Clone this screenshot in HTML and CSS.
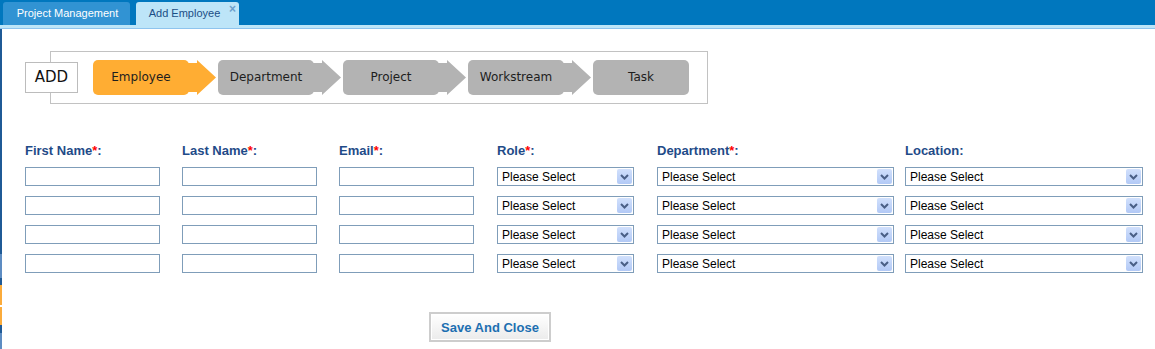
FILE: index.html
```html
<!DOCTYPE html>
<html lang="en">
<head>
  <meta charset="UTF-8" />
  <title>Add Employee</title>
  <link rel="stylesheet" href="styles.css">
</head>
<body>

  <div class="tabbar">
    <div class="tab">Project Management</div>
    <div class="tab tab-aktiv">Add Employee <span class="tab-close">&times;</span></div>
  </div>
  <div class="tabline"></div>

  <div class="page">
    <div class="edge"></div>

    <div class="content">
      <div class="wizard">
        <div class="wizard-add">ADD</div>
        <div class="wizard-box">
          <div class="step step-aktiv">
            <div class="step-label">Employee</div>
            <svg class="step-arrow" width="30" height="35" viewBox="0 0 30 35"><polygon points="0,3 9,3 9,0 28,17.5 9,35 9,32 0,32"/></svg>
          </div>
          <div class="step">
            <div class="step-label">Department</div>
            <svg class="step-arrow" width="30" height="35" viewBox="0 0 30 35"><polygon points="0,3 9,3 9,0 28,17.5 9,35 9,32 0,32"/></svg>
          </div>
          <div class="step">
            <div class="step-label">Project</div>
            <svg class="step-arrow" width="30" height="35" viewBox="0 0 30 35"><polygon points="0,3 9,3 9,0 28,17.5 9,35 9,32 0,32"/></svg>
          </div>
          <div class="step">
            <div class="step-label">Workstream</div>
            <svg class="step-arrow" width="30" height="35" viewBox="0 0 30 35"><polygon points="0,3 9,3 9,0 28,17.5 9,35 9,32 0,32"/></svg>
          </div>
          <div class="step">
            <div class="step-label">Task</div>
          </div>
        </div>
      </div>

      <div class="formular" id="formular">
        <div class="label">First Name<span class="pflicht">*</span>:</div>
        <div class="label">Last Name<span class="pflicht">*</span>:</div>
        <div class="label">Email<span class="pflicht">*</span>:</div>
        <div class="label">Role<span class="pflicht">*</span>:</div>
        <div class="label">Department<span class="pflicht">*</span>:</div>
        <div class="label">Location:</div>
      </div>

      <button class="btn-save">Save And Close</button>
    </div>
  </div>

  <script>
    const formular = document.getElementById("formular");
    const pfeil = '<svg width="9" height="6" viewBox="0 0 9 6"><polyline points="1,1 4.5,4.5 8,1" fill="none" stroke="#4a5f86" stroke-width="2"/></svg>';

    for (let zeile = 0; zeile < 4; zeile++) {
      for (let i = 0; i < 3; i++) {
        const feld = document.createElement("input");
        feld.type = "text";
        feld.className = "feld";
        formular.appendChild(feld);
      }
      ["auswahl-role", "auswahl-dept", "auswahl-loc"].forEach(klasse => {
        const auswahl = document.createElement("div");
        auswahl.className = "auswahl " + klasse;
        auswahl.innerHTML = '<span class="auswahl-text">Please Select</span><span class="auswahl-btn">' + pfeil + '</span>';
        formular.appendChild(auswahl);
      });
    }
  </script>
</body>
</html>
```

FILE: styles.css
```css
* {
  box-sizing: border-box;
}

body {
  margin: 0;
  padding: 0;
  overflow: hidden;
  font-family: "Liberation Sans", Arial, sans-serif;
  background: #fff;
}

/* Reiter oben */
.tabbar {
  height: 25px;
  background: #0077be;
  display: flex;
  align-items: flex-end;
  gap: 6px;
  padding-left: 3px;
}

.tab {
  height: 23px;
  width: 127px;
  background: #3193d3;
  color: #fff;
  font-size: 11px;
  line-height: 23px;
  text-align: center;
  border-radius: 3px 3px 0 0;
  padding-left: 2px;
}

.tab-aktiv {
  width: 103px;
  background: #bde5f8;
  color: #1b4e86;
  position: relative;
  padding-right: 8px;
}

.tab-close {
  position: absolute;
  top: -4px;
  right: 3px;
  font-size: 12px;
  font-weight: bold;
  color: #6c9fcb;
}

.tabline {
  height: 4px;
  background: #bde5f8;
  border-bottom: 1px solid #8ec4ee;
}

.page {
  display: flex;
  height: 320px;
}

.edge {
  width: 3px;
  background: linear-gradient(to bottom,
    #1f5a96 0, #1f5a96 225px,
    #5d8cc2 225px, #5d8cc2 249px,
    #1f5a96 249px, #1f5a96 256px,
    #fbab3b 256px, #fbab3b 276px,
    #fff 276px, #fff 278px,
    #fbab3b 278px, #fbab3b 296px,
    #1f5a96 296px, #1f5a96 304px,
    #5d8cc2 304px);
  border-right: 1px solid #fff;
}

.content {
  flex: 1;
  padding-top: 22px;
}

/* Schritt-Leiste */
.wizard {
  display: flex;
  align-items: center;
  margin-left: 22px;
}

.wizard-add {
  position: relative;
  z-index: 1;
  width: 53px;
  height: 31px;
  background: #fff;
  border: 1px solid #bcbcbc;
  font-family: "DejaVu Sans", Verdana, sans-serif;
  font-size: 15px;
  line-height: 29px;
  text-align: center;
  color: #111;
}

.wizard-box {
  margin-left: -28px;
  width: 658px;
  height: 53px;
  border: 1px solid #c2c2c2;
  display: flex;
  align-items: center;
  padding-left: 42px;
}

.step {
  display: flex;
  align-items: center;
}

.step-label {
  width: 96px;
  height: 35px;
  background: #b3b3b3;
  border-radius: 5px;
  font-family: "DejaVu Sans", Verdana, sans-serif;
  font-size: 12px;
  line-height: 35px;
  text-align: center;
  color: #1e1e1e;
}

.step-arrow {
  display: block;
  margin-left: -1px;
  fill: #b3b3b3;
}

.step-aktiv .step-label {
  background: #ffad33;
}

.step-aktiv .step-arrow {
  fill: #ffad33;
}

/* Formular */
.formular {
  display: grid;
  grid-template-columns: 157px 157px 158px 160px 248px 238px;
  grid-auto-rows: 19px;
  grid-template-rows: 15px;
  row-gap: 10px;
  margin-top: 38px;
  margin-left: 22px;
}

.label {
  font-size: 13px;
  font-weight: bold;
  color: #1f4b88;
  line-height: 15px;
  padding-top: 1px;
}

.pflicht {
  color: #f00;
}

.feld {
  width: 135px;
  height: 19px;
  margin: 0;
  border: 1px solid #7f9db9;
  background: #fff;
  padding: 0 3px;
}

.auswahl {
  height: 19px;
  border: 1px solid #7f9db9;
  background: #fff;
  display: flex;
  align-items: center;
  justify-content: space-between;
  padding: 0 1px 0 4px;
}

.auswahl-role { width: 137px; }
.auswahl-dept { width: 237px; }
.auswahl-loc { width: 238px; }

.auswahl-text {
  font-size: 12px;
  color: #000;
}

.auswahl-btn {
  width: 15px;
  height: 15px;
  border-radius: 2px;
  background: linear-gradient(to bottom, #d1e0fc, #b2c9f6);
  display: flex;
  align-items: center;
  justify-content: center;
}

.auswahl-btn svg {
  display: block;
}

.btn-save {
  display: block;
  margin: 39px 0 0 426px;
  width: 122px;
  height: 30px;
  border: 2px solid #cdcdcd;
  background: linear-gradient(to bottom, #ffffff, #ebebeb);
  box-shadow: inset 0 0 0 1px #fff;
  font-family: "Liberation Sans", Arial, sans-serif;
  font-size: 13px;
  font-weight: bold;
  color: #1c6fb1;
  padding: 0;
}
```
